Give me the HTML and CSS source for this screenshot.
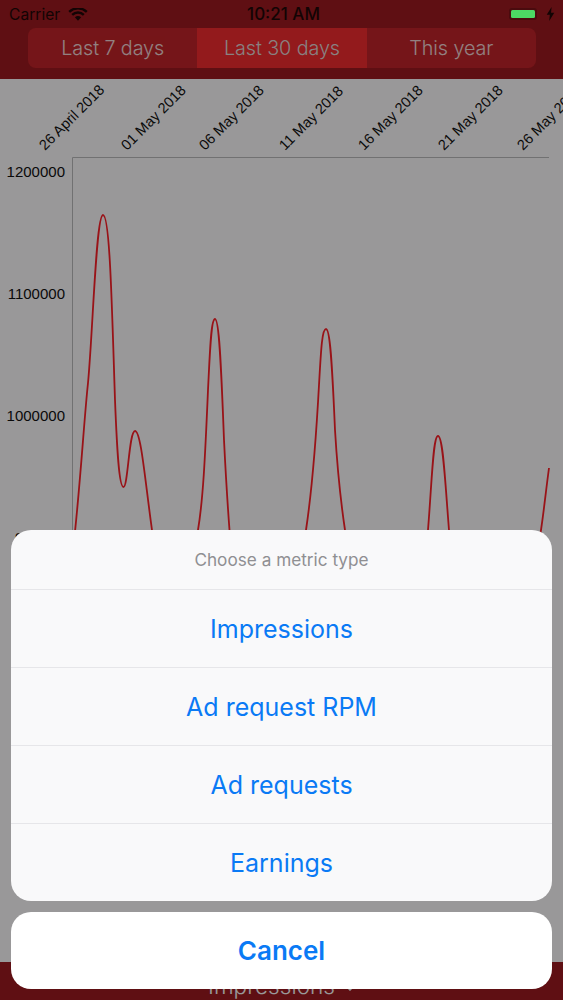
FILE: index.html
```html
<!DOCTYPE html>
<html lang="en">
<head>
<meta charset="utf-8">
<title>Metrics</title>
<link rel="stylesheet" href="styles.css">
</head>
<body>
<div class="screen">
  <header class="top">
    <nav class="segments">
      <div class="segment">Last 7 days</div>
      <div class="segment active">Last 30 days</div>
      <div class="segment">This year</div>
    </nav>
  </header>
  <main class="chart">
    <svg class="chart-svg" viewBox="0 79 563 883" width="563" height="883">
      <g class="date-labels">
        <text transform="translate(45 151) rotate(-45)">26 April 2018</text>
        <text transform="translate(127 151) rotate(-45)">01 May 2018</text>
        <text transform="translate(205 151) rotate(-45)">06 May 2018</text>
        <text transform="translate(285 151) rotate(-45)">11 May 2018</text>
        <text transform="translate(364 151) rotate(-45)">16 May 2018</text>
        <text transform="translate(444 151) rotate(-45)">21 May 2018</text>
        <text transform="translate(523 151) rotate(-45)">26 May 2018</text>
      </g>
      <g class="value-labels">
        <text x="65" y="177">1200000</text>
        <text x="65" y="299">1100000</text>
        <text x="65" y="421">1000000</text>
        <text x="65" y="543">900000</text>
      </g>
      <path class="axis" d="M72.5 700V157.5H549"/>
      <path class="curve" d="M73 550C80 490 84 420 88 383C93 330 96 215 103 215C110 215 112 310 115 400C117 450 119 487 123.5 487C128 487 129 431 135 431C141 431 145 480 152 530C157 570 165 610 175 610C185 610 193 560 198 530C203 500 205 460 208 390C210 350 211 319 215 319C219 319 221 360 224 440C226 480 228 510 229.5 530C233 580 245 610 265 610C285 610 300 570 306 530C312 490 316 440 319 385C321 350 322 329 326 329C330 329 332 360 335 430C338 480 342 510 345 530C350 580 370 610 390 610C410 610 424 570 428 530C432 480 433 436 438 436C443 436 445 480 449 530C455 580 480 610 500 610C520 610 535 570 541 530C544 510 546 490 549 468"/>
    </svg>
  </main>
  <footer class="bottom">
    <span class="metric">Impressions</span>
    <svg class="chev" viewBox="0 0 10 6" width="10" height="6"><path d="M1 1l4 4 4-4"/></svg>
  </footer>

  <div class="dim"></div>

  <div class="status">
    <div class="status-left">
      <span>Carrier</span>
      <svg class="wifi" viewBox="0 0 20 13" width="20" height="13">
        <path d="M10 12.8L6.9 9.3a4.6 4.6 0 0 1 6.2 0z"/>
        <path class="arc" d="M4.2 6.8a8.4 8.4 0 0 1 11.6 0"/>
        <path class="arc" d="M1.2 3.8a13 13 0 0 1 17.6 0"/>
      </svg>
    </div>
    <span class="time">10:21 AM</span>
    <div class="status-right">
      <span class="battery"><span class="battery-fill"></span></span>
      <svg class="bolt" viewBox="0 0 8 13" width="9" height="14"><path d="M5 0L0.5 7.3H3.4L2.8 13L7.5 5.4H4.5z"/></svg>
    </div>
  </div>

  <div class="sheet">
    <div class="group">
      <div class="sheet-title">Choose a metric type</div>
      <div class="option">Impressions</div>
      <div class="option">Ad request RPM</div>
      <div class="option">Ad requests</div>
      <div class="option">Earnings</div>
    </div>
    <div class="cancel">Cancel</div>
  </div>
</div>
</body>
</html>
```
FILE: styles.css
```css
* { box-sizing: border-box; }
html, body { margin: 0; padding: 0; }
body { font-family: Inter, "Liberation Sans", sans-serif; background: #fff; }
.screen {
  position: relative;
  width: 563px;
  height: 1000px;
  overflow: hidden;
  display: flex;
  flex-direction: column;
}
.top {
  height: 79px;
  padding: 28px 27px 11px 28px;
  background: #9f1a20;
}
.segments {
  display: flex;
  height: 40px;
  border-radius: 8px;
  overflow: hidden;
  background: #c4242a;
}
.segment {
  flex: 1;
  display: flex;
  align-items: center;
  justify-content: center;
  color: #fff;
  opacity: .82;
  font-size: 19.8px;
  font-weight: 300;
  letter-spacing: -.1px;
}
.segment.active { background: #f52c30; opacity: 1; color: #e4d8d8; }
.chart { flex: 1; background: #fffdff; }
.chart-svg { display: block; }
.date-labels text, .value-labels text {
  font-family: "Liberation Sans", Arial, sans-serif;
  fill: #111;
}
.date-labels text { font-size: 14.6px; }
.value-labels text { font-size: 15px; text-anchor: end; }
.axis { fill: none; stroke: #bcbcbe; stroke-width: 1; }
.curve { fill: none; stroke: #ff2029; stroke-width: 1.8; }
.bottom {
  height: 38px;
  background: #9f1a20;
  display: flex;
  align-items: flex-end;
  justify-content: center;
  gap: 10px;
  color: #fff;
  font-size: 22.6px;
  font-weight: 300;
  line-height: 28px;
  padding-bottom: 0;
}
.chev { margin-bottom: 9px; }
.chev path { fill: none; stroke: #fff; stroke-width: 1.5; }
.dim {
  position: absolute;
  inset: 0;
  background: rgba(0, 0, 0, .4);
}
.status {
  position: absolute;
  top: 0;
  left: 0;
  right: 0;
  height: 28px;
  display: flex;
  align-items: center;
  justify-content: space-between;
  padding: 0 8px 0 9px;
  font-size: 15.6px;
  color: #120404;
}
.status-left { display: flex; align-items: center; gap: 8px; }
.wifi path { fill: #120404; }
.wifi .arc { fill: none; stroke: #120404; stroke-width: 2.4; }
.time {
  position: absolute;
  left: 4px;
  right: 0;
  text-align: center;
  font-size: 17px;
  font-weight: 500;
}
.status-right { display: flex; align-items: center; gap: 9px; }
.battery {
  display: block;
  width: 28px;
  height: 12px;
  padding: 2px;
  border-radius: 3px;
  background: #4a0b0e;
}
.battery-fill {
  display: block;
  height: 100%;
  border-radius: 1.5px;
  background: #4cd964;
}
.bolt path { fill: #120404; }
.sheet {
  position: absolute;
  left: 11px;
  right: 11px;
  top: 530px;
  display: flex;
  flex-direction: column;
  gap: 11px;
}
.group {
  background: #f9f9fa;
  border-radius: 20px;
  overflow: hidden;
}
.sheet-title {
  height: 59px;
  display: flex;
  align-items: center;
  justify-content: center;
  color: #8f8f92;
  font-size: 17.2px;
}
.option {
  height: 78px;
  display: flex;
  align-items: center;
  justify-content: center;
  border-top: 1px solid #e6e6e9;
  color: #0a7af5;
  font-size: 25px;
}
.cancel {
  height: 77px;
  background: #fff;
  border-radius: 20px;
  display: flex;
  align-items: center;
  justify-content: center;
  color: #0a7af5;
  font-size: 26px;
  font-weight: 600;
}
```
